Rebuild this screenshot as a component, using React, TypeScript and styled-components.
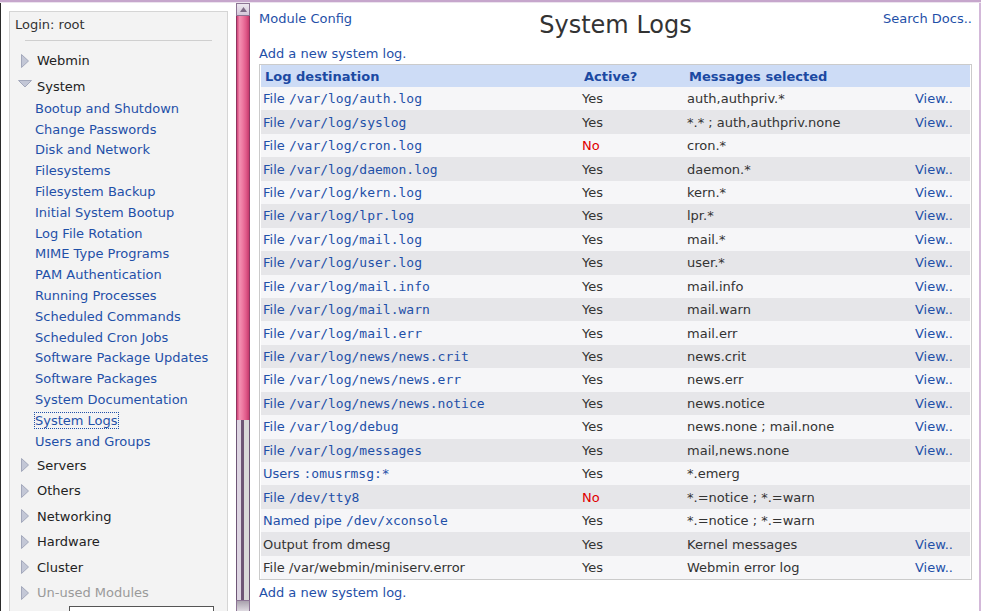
import React from "react";
import styled, { createGlobalStyle } from "styled-components";

const GlobalStyle = createGlobalStyle`
  html, body { margin: 0; padding: 0; height: 100%; overflow: hidden; background: #fff; }
  body { font-family: "DejaVu Sans", "Liberation Sans", sans-serif; font-size: 13px; color: #333; }
`;

const LINK = "#1f50a8";

const Page = styled.div`
  height: 611px;
  display: flex;
  flex-direction: column;
  border-top: 2px solid #c6a6cc;
`;

const TopHighlight = styled.div`
  height: 1px;
  background: #ece3ee;
  flex-shrink: 0;
`;

const Frames = styled.div`
  flex: 1;
  display: flex;
  min-height: 0;
`;

const LeftFrame = styled.div`
  width: 236px;
  flex-shrink: 0;
  box-sizing: border-box;
  border-left: 1px solid #2b2b2b;
  padding: 8px 0 0 8px;
  display: flex;
  flex-direction: column;
  background: #fff;
`;

const NavBox = styled.nav`
  width: 219px;
  flex: 1;
  box-sizing: border-box;
  border: 1px solid #d5d5d5;
  border-bottom: none;
  background: #f3f3f3;
  padding-top: 5px;
  overflow: hidden;
`;

const Login = styled.div`
  padding-left: 5px;
  color: #333;
`;

const Separator = styled.div`
  margin: 8px 15px 7px;
  border-top: 1px solid #cfcfcf;
`;

const Category = styled.div<{ $muted?: boolean }>`
  height: 25.5px;
  display: flex;
  align-items: center;
  gap: 4px;
  padding-left: 7px;
  color: ${(p) => (p.$muted ? "#9a9a9a" : "#222")};
`;

const SubList = styled.div`
  display: flex;
  flex-direction: column;
  margin-top: -1px;
  margin-bottom: 1px;
`;

const SubItem = styled.div`
  height: 20.8px;
  display: flex;
  align-items: center;
  padding-left: 25px;
`;

const NavLink = styled.a<{ $focused?: boolean }>`
  color: ${LINK};
  text-decoration: none;
  outline: ${(p) => (p.$focused ? `1px dotted ${LINK}` : "none")};
`;

const SearchBox = styled.input`
  display: block;
  margin-left: 59px;
  width: 145px;
  height: 22px;
  box-sizing: border-box;
  border: 1px solid #555;
  background: #fff;
`;

const ScrollBar = styled.div`
  width: 14px;
  flex-shrink: 0;
  display: flex;
  flex-direction: column;
  background: #fff;
`;

const ScrollButton = styled.div<{ $bottom?: boolean }>`
  height: 13px;
  box-sizing: border-box;
  border: 1px solid #8c7494;
  background: ${(p) =>
    p.$bottom
      ? "linear-gradient(to bottom, #a9a1ad, #e4e0e6)"
      : "linear-gradient(to bottom, #ece6ef, #d4c8da)"};
  display: flex;
  align-items: center;
  justify-content: center;
  flex-shrink: 0;
`;

const Thumb = styled.div`
  height: 404px;
  flex-shrink: 0;
  box-sizing: border-box;
  border-left: 1px solid #8e3460;
  border-right: 1px solid #8e3460;
  background: linear-gradient(
    to right,
    #d04478 0%,
    #f38fb2 22%,
    #ee7aa2 45%,
    #e05a8a 75%,
    #c63a6c 100%
  );
`;

const Track = styled.div`
  flex: 1;
  background: linear-gradient(
    to right,
    #6e5676 0px,
    #6e5676 1px,
    #ddd5e2 1px,
    #ddd5e2 5px,
    #6e5676 5px,
    #6e5676 8px,
    #d9d9d9 8px,
    #d9d9d9 13px,
    #6e5676 13px
  );
`;

const Main = styled.main`
  flex: 1;
  min-width: 0;
  border-right: 2px solid #d3b8d9;
  padding: 8px 7px 0 9px;
  background: #fff;
`;

const HeaderGrid = styled.div`
  display: grid;
  grid-template-columns: 1fr auto 1fr;
  align-items: start;
`;

const Title = styled.h1`
  margin: 0;
  font-size: 24px;
  font-weight: normal;
  color: #333;
  line-height: 28px;
`;

const Link = styled.a`
  color: ${LINK};
  text-decoration: none;
`;

const RightLink = styled(Link)`
  justify-self: end;
`;

const AddLink = styled(Link)<{ $top: number }>`
  display: block;
  margin-top: ${(p) => p.$top}px;
`;

const Table = styled.div`
  margin-top: 3px;
  border: 1px solid #cbcbcb;
  padding: 0 1px;
  background: #fff;
`;

const Row = styled.div<{ $header?: boolean; $alt?: boolean }>`
  display: grid;
  grid-template-columns: 319px 105px 228px 1fr;
  align-items: center;
  height: ${(p) => (p.$header ? "22px" : "23.45px")};
  background: ${(p) => (p.$header ? "#cddcf6" : p.$alt ? "#e6e6e9" : "#f6f6f8")};
`;

const HeadCell = styled.div`
  padding-left: 4px;
  font-weight: bold;
  color: #1b49a2;
  white-space: nowrap;
`;

const Cell = styled.div<{ $red?: boolean }>`
  padding-left: 2px;
  white-space: nowrap;
  color: ${(p) => (p.$red ? "#e00000" : "#333")};
`;

const Mono = styled.span`
  font-family: "DejaVu Sans Mono", "Liberation Mono", monospace;
`;

const RightTri = () => (
  <svg width="16" height="14" viewBox="0 0 16 14">
    <polygon points="4.5,0.5 11.5,7 4.5,13.5" fill="#c3c7d6" stroke="#a3a8bb" strokeWidth="1" />
  </svg>
);

const DownTri = () => (
  <svg width="16" height="14" viewBox="0 0 16 14">
    <polygon points="1.5,1.5 14.5,1.5 8,8" fill="#c3c7d6" stroke="#a3a8bb" strokeWidth="1" />
  </svg>
);

const UpArrow = () => (
  <svg width="7" height="5" viewBox="0 0 7 5">
    <polygon points="0,5 7,5 3.5,0" fill="#7d6a86" />
  </svg>
);

const systemItems = [
  "Bootup and Shutdown",
  "Change Passwords",
  "Disk and Network",
  "Filesystems",
  "Filesystem Backup",
  "Initial System Bootup",
  "Log File Rotation",
  "MIME Type Programs",
  "PAM Authentication",
  "Running Processes",
  "Scheduled Commands",
  "Scheduled Cron Jobs",
  "Software Package Updates",
  "Software Packages",
  "System Documentation",
  "System Logs",
  "Users and Groups",
];

type LogRow = {
  prefix: string;
  path?: string;
  plain?: boolean;
  active: boolean;
  msgs: string;
  view: boolean;
};

const rows: LogRow[] = [
  { prefix: "File", path: "/var/log/auth.log", active: true, msgs: "auth,authpriv.*", view: true },
  { prefix: "File", path: "/var/log/syslog", active: true, msgs: "*.* ; auth,authpriv.none", view: true },
  { prefix: "File", path: "/var/log/cron.log", active: false, msgs: "cron.*", view: false },
  { prefix: "File", path: "/var/log/daemon.log", active: true, msgs: "daemon.*", view: true },
  { prefix: "File", path: "/var/log/kern.log", active: true, msgs: "kern.*", view: true },
  { prefix: "File", path: "/var/log/lpr.log", active: true, msgs: "lpr.*", view: true },
  { prefix: "File", path: "/var/log/mail.log", active: true, msgs: "mail.*", view: true },
  { prefix: "File", path: "/var/log/user.log", active: true, msgs: "user.*", view: true },
  { prefix: "File", path: "/var/log/mail.info", active: true, msgs: "mail.info", view: true },
  { prefix: "File", path: "/var/log/mail.warn", active: true, msgs: "mail.warn", view: true },
  { prefix: "File", path: "/var/log/mail.err", active: true, msgs: "mail.err", view: true },
  { prefix: "File", path: "/var/log/news/news.crit", active: true, msgs: "news.crit", view: true },
  { prefix: "File", path: "/var/log/news/news.err", active: true, msgs: "news.err", view: true },
  { prefix: "File", path: "/var/log/news/news.notice", active: true, msgs: "news.notice", view: true },
  { prefix: "File", path: "/var/log/debug", active: true, msgs: "news.none ; mail.none", view: true },
  { prefix: "File", path: "/var/log/messages", active: true, msgs: "mail,news.none", view: true },
  { prefix: "Users", path: ":omusrmsg:*", active: true, msgs: "*.emerg", view: false },
  { prefix: "File", path: "/dev/tty8", active: false, msgs: "*.=notice ; *.=warn", view: false },
  { prefix: "Named pipe", path: "/dev/xconsole", active: true, msgs: "*.=notice ; *.=warn", view: false },
  { prefix: "Output from dmesg", plain: true, active: true, msgs: "Kernel messages", view: true },
  { prefix: "File /var/webmin/miniserv.error", plain: true, active: true, msgs: "Webmin error log", view: true },
];

export default function App() {
  return (
    <>
      <GlobalStyle />
      <Page>
        <TopHighlight />
        <Frames>
          <LeftFrame>
            <NavBox>
              <Login>Login: root</Login>
              <Separator />
              <Category>
                <RightTri />
                <span>Webmin</span>
              </Category>
              <Category>
                <DownTri />
                <span>System</span>
              </Category>
              <SubList>
                {systemItems.map((it) => (
                  <SubItem key={it}>
                    <NavLink href="#" $focused={it === "System Logs"}>
                      {it}
                    </NavLink>
                  </SubItem>
                ))}
              </SubList>
              {["Servers", "Others", "Networking", "Hardware", "Cluster"].map((c) => (
                <Category key={c}>
                  <RightTri />
                  <span>{c}</span>
                </Category>
              ))}
              <Category $muted>
                <RightTri />
                <span>Un-used Modules</span>
              </Category>
              <SearchBox type="text" />
            </NavBox>
          </LeftFrame>
          <ScrollBar>
            <ScrollButton>
              <UpArrow />
            </ScrollButton>
            <Thumb />
            <Track />
            <ScrollButton $bottom />
          </ScrollBar>
          <Main>
            <HeaderGrid>
              <Link href="#">Module Config</Link>
              <Title>System Logs</Title>
              <RightLink href="#">Search Docs..</RightLink>
            </HeaderGrid>
            <AddLink href="#" $top={7}>
              Add a new system log.
            </AddLink>
            <Table>
              <Row $header>
                <HeadCell>Log destination</HeadCell>
                <HeadCell>Active?</HeadCell>
                <HeadCell>Messages selected</HeadCell>
                <HeadCell />
              </Row>
              {rows.map((r, i) => (
                <Row key={i} $alt={i % 2 === 1}>
                  <Cell>
                    {r.plain ? (
                      r.prefix
                    ) : (
                      <Link href="#">
                        {r.prefix} <Mono>{r.path}</Mono>
                      </Link>
                    )}
                  </Cell>
                  <Cell $red={!r.active}>{r.active ? "Yes" : "No"}</Cell>
                  <Cell>{r.msgs}</Cell>
                  <Cell>{r.view ? <Link href="#">View..</Link> : null}</Cell>
                </Row>
              ))}
            </Table>
            <AddLink href="#" $top={5}>
              Add a new system log.
            </AddLink>
          </Main>
        </Frames>
      </Page>
    </>
  );
}
